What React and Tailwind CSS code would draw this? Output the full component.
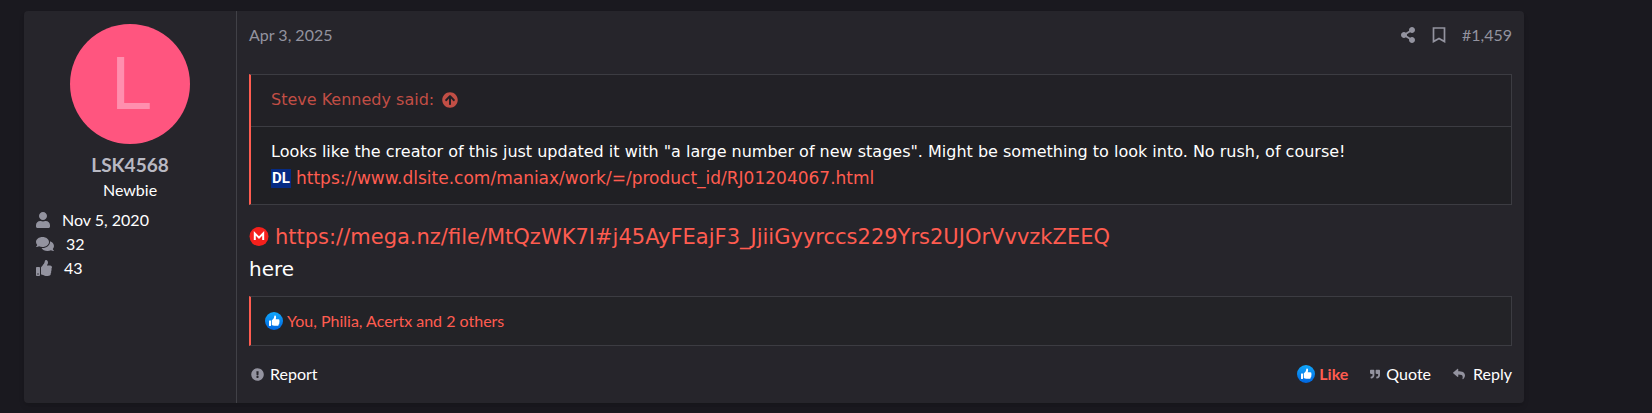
import { FaUser, FaComments, FaThumbsUp, FaShareAlt, FaArrowCircleUp, FaQuoteRight, FaReply, FaExclamationCircle } from "react-icons/fa";

const verdana = "font-['DejaVu_Sans',Verdana,sans-serif]";

export default function App(){
    return (
      <div className="min-h-screen bg-[#1a191f] pt-[11px] pb-[10px] pl-6 pr-6 font-[Lato,sans-serif] text-base text-white">
        <article className="flex max-w-[1500px] rounded bg-[#26252b] shadow-md">
          <UserCell name="LSK4568" title="Newbie" />
          <div className="flex-1 px-3 pt-3">
            <PostHeader />
            <PostBody />
            <ReactionsBar text="You, Philia, Acertx and 2 others" />
            <PostActions />
          </div>
        </article>
      </div>
    )
}


function UserCell({name, title}){
    return (
      <section className="w-[213px] shrink-0 border-r border-[#414147] px-3 pt-[13px] pb-3">
        <a href="#user" className={`mx-auto flex size-[120px] items-center justify-center rounded-full bg-[#ff557f] text-7xl text-[#ff8fae] ${verdana}`}>
          L
        </a>
        <h4 className="mt-2 text-center text-[19px] leading-[26px] font-bold text-[#b9b9c3]">
          <a href="#user">{name}</a>
        </h4>
        <h5 className="text-center leading-6">{title}</h5>
        <dl className="mt-[6px] leading-6">
          <UserStat icon={<FaUser className="h-4 w-[14px]" />} label="Joined" value="Nov 5, 2020" />
          <UserStat icon={<FaComments size={18} />} label="Messages" value="32" />
          <UserStat icon={<FaThumbsUp size={16} />} label="Reaction score" value="43" />
        </dl>
      </section>
    )
}


function UserStat({icon, label, value}){
    return (
      <div className="flex items-center gap-3">
        <dt className="text-[#93939f]" aria-label={label}>{icon}</dt>
        <dd>{value}</dd>
      </div>
    )
}


function PostHeader(){
    return (
      <header className="flex items-center leading-6 text-[#93939f]">
        <a href="#post"><time>Apr 3, 2025</time></a>
        <div className="ml-auto flex items-center gap-4">
          <a href="#share" aria-label="Share"><FaShareAlt size={16} /></a>
          <a href="#bookmark" aria-label="Bookmark"><BookmarkIcon /></a>
          <a href="#post">#1,459</a>
        </div>
      </header>
    )
}


function PostBody(){
    return (
      <div className={`mt-[27px] ${verdana}`}>
        <blockquote className="border border-l-2 border-[#3c3c42] border-l-[#ff5c50] bg-[#202024] text-base leading-[26px]">
          <a href="#quote" className="flex items-center gap-2 border-b border-[#3c3c42] bg-[#222126] px-5 pt-3 pb-[13px] text-[#c14e45]">
            Steve Kennedy said:
            <FaArrowCircleUp size={16} />
          </a>
          <div className="px-5 pt-3 pb-[13px]">
            <p>Looks like the creator of this just updated it with "a large number of new stages". Might be something to look into. No rush, of course!</p>
            <p className="flex items-center gap-[5px]">
              <DlsiteIcon />
              <a href="#dlsite" className="text-[17px] text-[#ff5c50]">https://www.dlsite.com/maniax/work/=/product_id/RJ01204067.html</a>
            </p>
          </div>
        </blockquote>
        <div className="mt-4 text-xl leading-8">
          <p className="flex items-center gap-[6px]">
            <MegaIcon />
            <a href="#mega" className="text-[21px] text-[#ff5c50]">https://mega.nz/file/MtQzWK7I#j45AyFEajF3_JjiiGyyrccs229Yrs2UJOrVvvzkZEEQ</a>
          </p>
          <p>here</p>
        </div>
      </div>
    )
}


function ReactionsBar({text}){
    return (
      <div className="mt-[11px] border border-l-2 border-[#3c3c42] border-l-[#ff5c50] bg-[#232327] px-[14px] py-3">
        <a href="#reactions" className="flex items-center gap-1 text-[#ff5c50]">
          <LikeIcon />
          {text}
        </a>
      </div>
    )
}


function PostActions(){
    return (
      <div className="flex items-center pt-4 pb-[17px] leading-6">
        <button type="button" className="flex items-center gap-[6px] pl-[2px]">
          <FaExclamationCircle size={13} className="text-[#93939f]" />
          Report
        </button>
        <div className="ml-auto flex items-center gap-[22px]">
          <button type="button" className="flex items-center gap-1 font-bold text-[#ff5c50]">
            <LikeIcon />
            Like
          </button>
          <button type="button" className="flex items-center gap-[6px]">
            <FaQuoteRight size={10} className="text-[#93939f]" />
            Quote
          </button>
          <button type="button" className="flex items-center gap-2">
            <FaReply size={12} className="text-[#93939f]" />
            Reply
          </button>
        </div>
      </div>
    )
}


function BookmarkIcon(){
    return (
      <svg className="h-4 w-[14px]" viewBox="0 0 14 16">
        <path d="M1.5 1h11v13.6L7 11.4l-5.5 3.2z" fill="none" stroke="currentColor" strokeWidth="1.7" />
      </svg>
    )
}


function LikeIcon(){
    return (
      <svg className="size-[18px] shrink-0" viewBox="0 0 18 18">
        <defs>
          <linearGradient id="likeBlue" x1="0" y1="0" x2="0" y2="1">
            <stop offset="0" stopColor="#10a8fb" />
            <stop offset="1" stopColor="#0065e0" />
          </linearGradient>
        </defs>
        <circle cx="9" cy="9" r="9" fill="url(#likeBlue)" />
        <rect x="4" y="8.4" width="2" height="5.6" rx="0.4" fill="#fff" />
        <path fill="#fff" d="M6.8 8.2C8.2 7.4 9 6 9.2 4.4c0-1.3 1.8-1 1.9.6 0 .8-.2 1.5-.4 2.2h2.6c1.2 0 1.5 1.1.9 1.8.6.5.5 1.3 0 1.7.3.6.1 1.2-.5 1.5.1.9-.4 1.6-1.4 1.6H9.3c-1 0-1.7-.3-2.5-.8z" />
      </svg>
    )
}


function MegaIcon(){
    return (
      <svg className="size-5 shrink-0" viewBox="0 0 20 20">
        <circle cx="10" cy="9.5" r="9.5" fill="#f5201c" />
        <path d="M5.8 13V6.4L10 10.6l4.2-4.2V13" fill="none" stroke="#fff" strokeWidth="2" />
      </svg>
    )
}


function DlsiteIcon(){
    return (
      <span className="flex h-[19px] w-5 shrink-0 items-center justify-center bg-[#052a83] font-['Liberation_Sans_Narrow',Roboto,sans-serif] text-[15px] font-bold text-white">
        DL
      </span>
    )
}
